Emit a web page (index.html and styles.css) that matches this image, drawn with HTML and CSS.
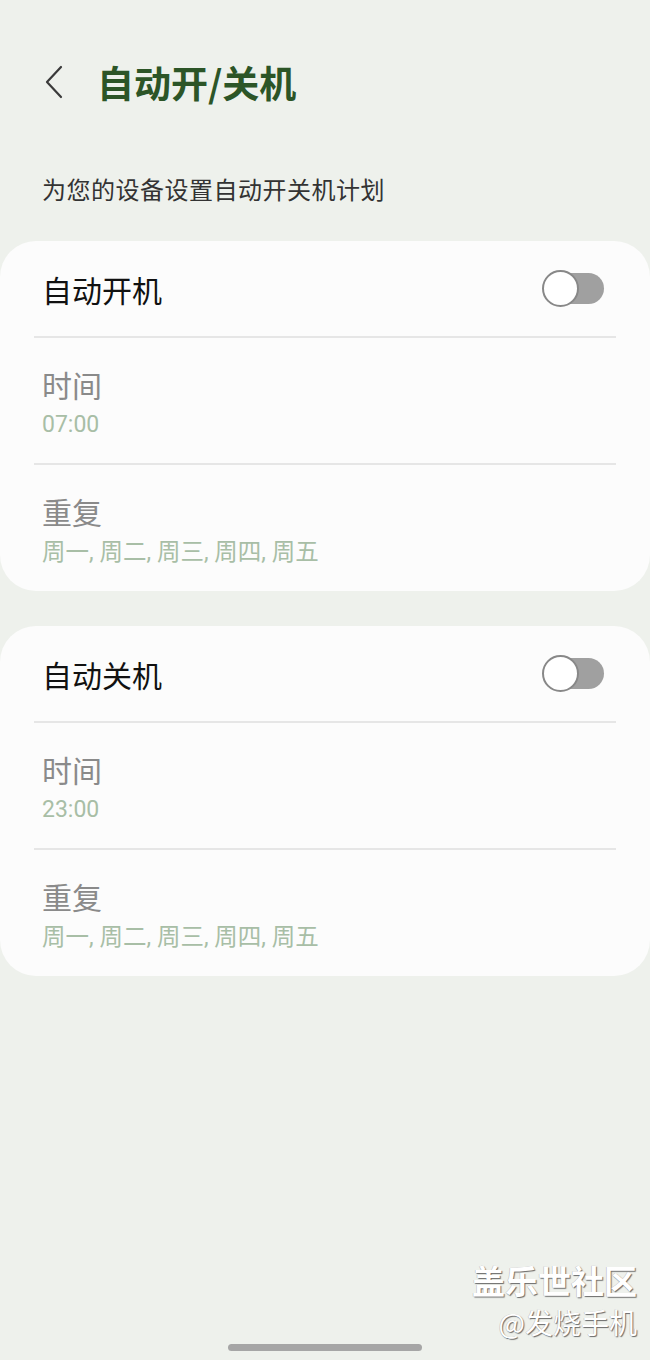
FILE: index.html
```html
<!DOCTYPE html>
<html lang="zh-CN">
<head>
<meta charset="utf-8">
<title>自动开/关机</title>
<link rel="stylesheet" href="styles.css">
</head>
<body>
<div class="screen">
  <header class="topbar">
    <svg class="back" width="20" height="34" viewBox="0 0 20 34">
      <path d="M17 2 L3 17 L17 32" fill="none" stroke="#3a3a3a" stroke-width="2.2" stroke-linecap="round" stroke-linejoin="round"/>
    </svg>
    <h1 class="title">自动开/关机</h1>
  </header>
  <p class="desc">为您的设备设置自动开关机计划</p>

  <section class="card">
    <div class="row head">
      <span class="main">自动开机</span>
      <span class="switch"><span class="knob"></span></span>
    </div>
    <div class="divider"></div>
    <div class="row item time">
      <div class="label">时间</div>
      <div class="value">07:00</div>
    </div>
    <div class="divider"></div>
    <div class="row item repeat">
      <div class="label">重复</div>
      <div class="value">周一, 周二, 周三, 周四, 周五</div>
    </div>
  </section>

  <section class="card">
    <div class="row head">
      <span class="main">自动关机</span>
      <span class="switch"><span class="knob"></span></span>
    </div>
    <div class="divider"></div>
    <div class="row item time">
      <div class="label">时间</div>
      <div class="value">23:00</div>
    </div>
    <div class="divider"></div>
    <div class="row item repeat">
      <div class="label">重复</div>
      <div class="value">周一, 周二, 周三, 周四, 周五</div>
    </div>
  </section>

  <div class="watermark">
    <div class="wm1">盖乐世社区</div>
    <div class="wm2">@发烧手机</div>
  </div>
  <div class="homebar"></div>
</div>
</body>
</html>
```

FILE: styles.css
```css
html, body {
  margin: 0;
  padding: 0;
  background: #eef1ec;
}
body {
  font-family: Roboto, "Noto Sans CJK SC", sans-serif;
}
.screen {
  position: relative;
  width: 650px;
  height: 1360px;
  overflow: hidden;
}
.topbar {
  display: flex;
  align-items: center;
  height: 54px;
  padding: 55px 0 0 44px;
}
.back {
  display: block;
  flex: none;
}
.title {
  margin: 0 0 0 33px;
  font-family: "Noto Sans CJK SC", sans-serif;
  font-size: 37px;
  font-weight: 700;
  line-height: 54px;
  color: #2c5527;
}
.desc {
  margin: 0;
  padding: 64px 0 0 42px;
  font-family: "Noto Sans CJK SC", sans-serif;
  font-size: 24px;
  line-height: 32px;
  letter-spacing: 0.5px;
  color: #333;
  height: 32px;
}
.card {
  margin-top: 35px;
  background: #fcfcfc;
  border-radius: 36px;
  display: flex;
  flex-direction: column;
}
.card:first-of-type {
  margin-top: 36px;
}
.row.head {
  height: 95px;
  display: flex;
  align-items: center;
  justify-content: space-between;
  padding: 0 46px 0 42px;
}
.main {
  font-family: "Noto Sans CJK SC", sans-serif;
  font-size: 30px;
  line-height: 40px;
  color: #111;
}
.switch {
  position: relative;
  width: 62px;
  height: 37px;
  display: block;
}
.switch::before {
  content: "";
  position: absolute;
  right: 0;
  top: 3px;
  width: 56px;
  height: 31px;
  border-radius: 16px;
  background: #a0a0a0;
}
.knob {
  position: absolute;
  left: 0;
  top: 0;
  width: 33px;
  height: 33px;
  border-radius: 50%;
  background: #fff;
  border: 2px solid #888;
}
.divider {
  height: 2px;
  margin: 0 34px;
  background: #e6e6e6;
}
.row.item {
  padding: 27px 42px 0;
  box-sizing: border-box;
}
.row.time { height: 125px; }
.row.repeat { height: 126px; }
.label {
  font-family: "Noto Sans CJK SC", sans-serif;
  font-size: 30px;
  line-height: 38px;
  color: #8a8a8a;
}
.value {
  margin-top: 7px;
  font-size: 23px;
  line-height: 30px;
  color: #a8bea6;
}
.repeat .value {
  font-size: 23.5px;
}
.watermark {
  position: absolute;
  right: 13px;
  top: 1262px;
  text-align: right;
  font-family: "Noto Sans CJK SC", sans-serif;
  color: #fff;
  text-shadow: 1px 1px 1px #6a6a6a, -0.5px -0.5px 0 #bbb;
}
.wm1 {
  font-size: 33px;
  font-weight: 700;
  line-height: 36px;
}
.wm2 {
  margin-top: 9px;
  font-size: 28px;
  line-height: 30px;
}
.homebar {
  position: absolute;
  left: 228px;
  top: 1344px;
  width: 194px;
  height: 7px;
  border-radius: 4px;
  background: #a6a6a6;
}
```
